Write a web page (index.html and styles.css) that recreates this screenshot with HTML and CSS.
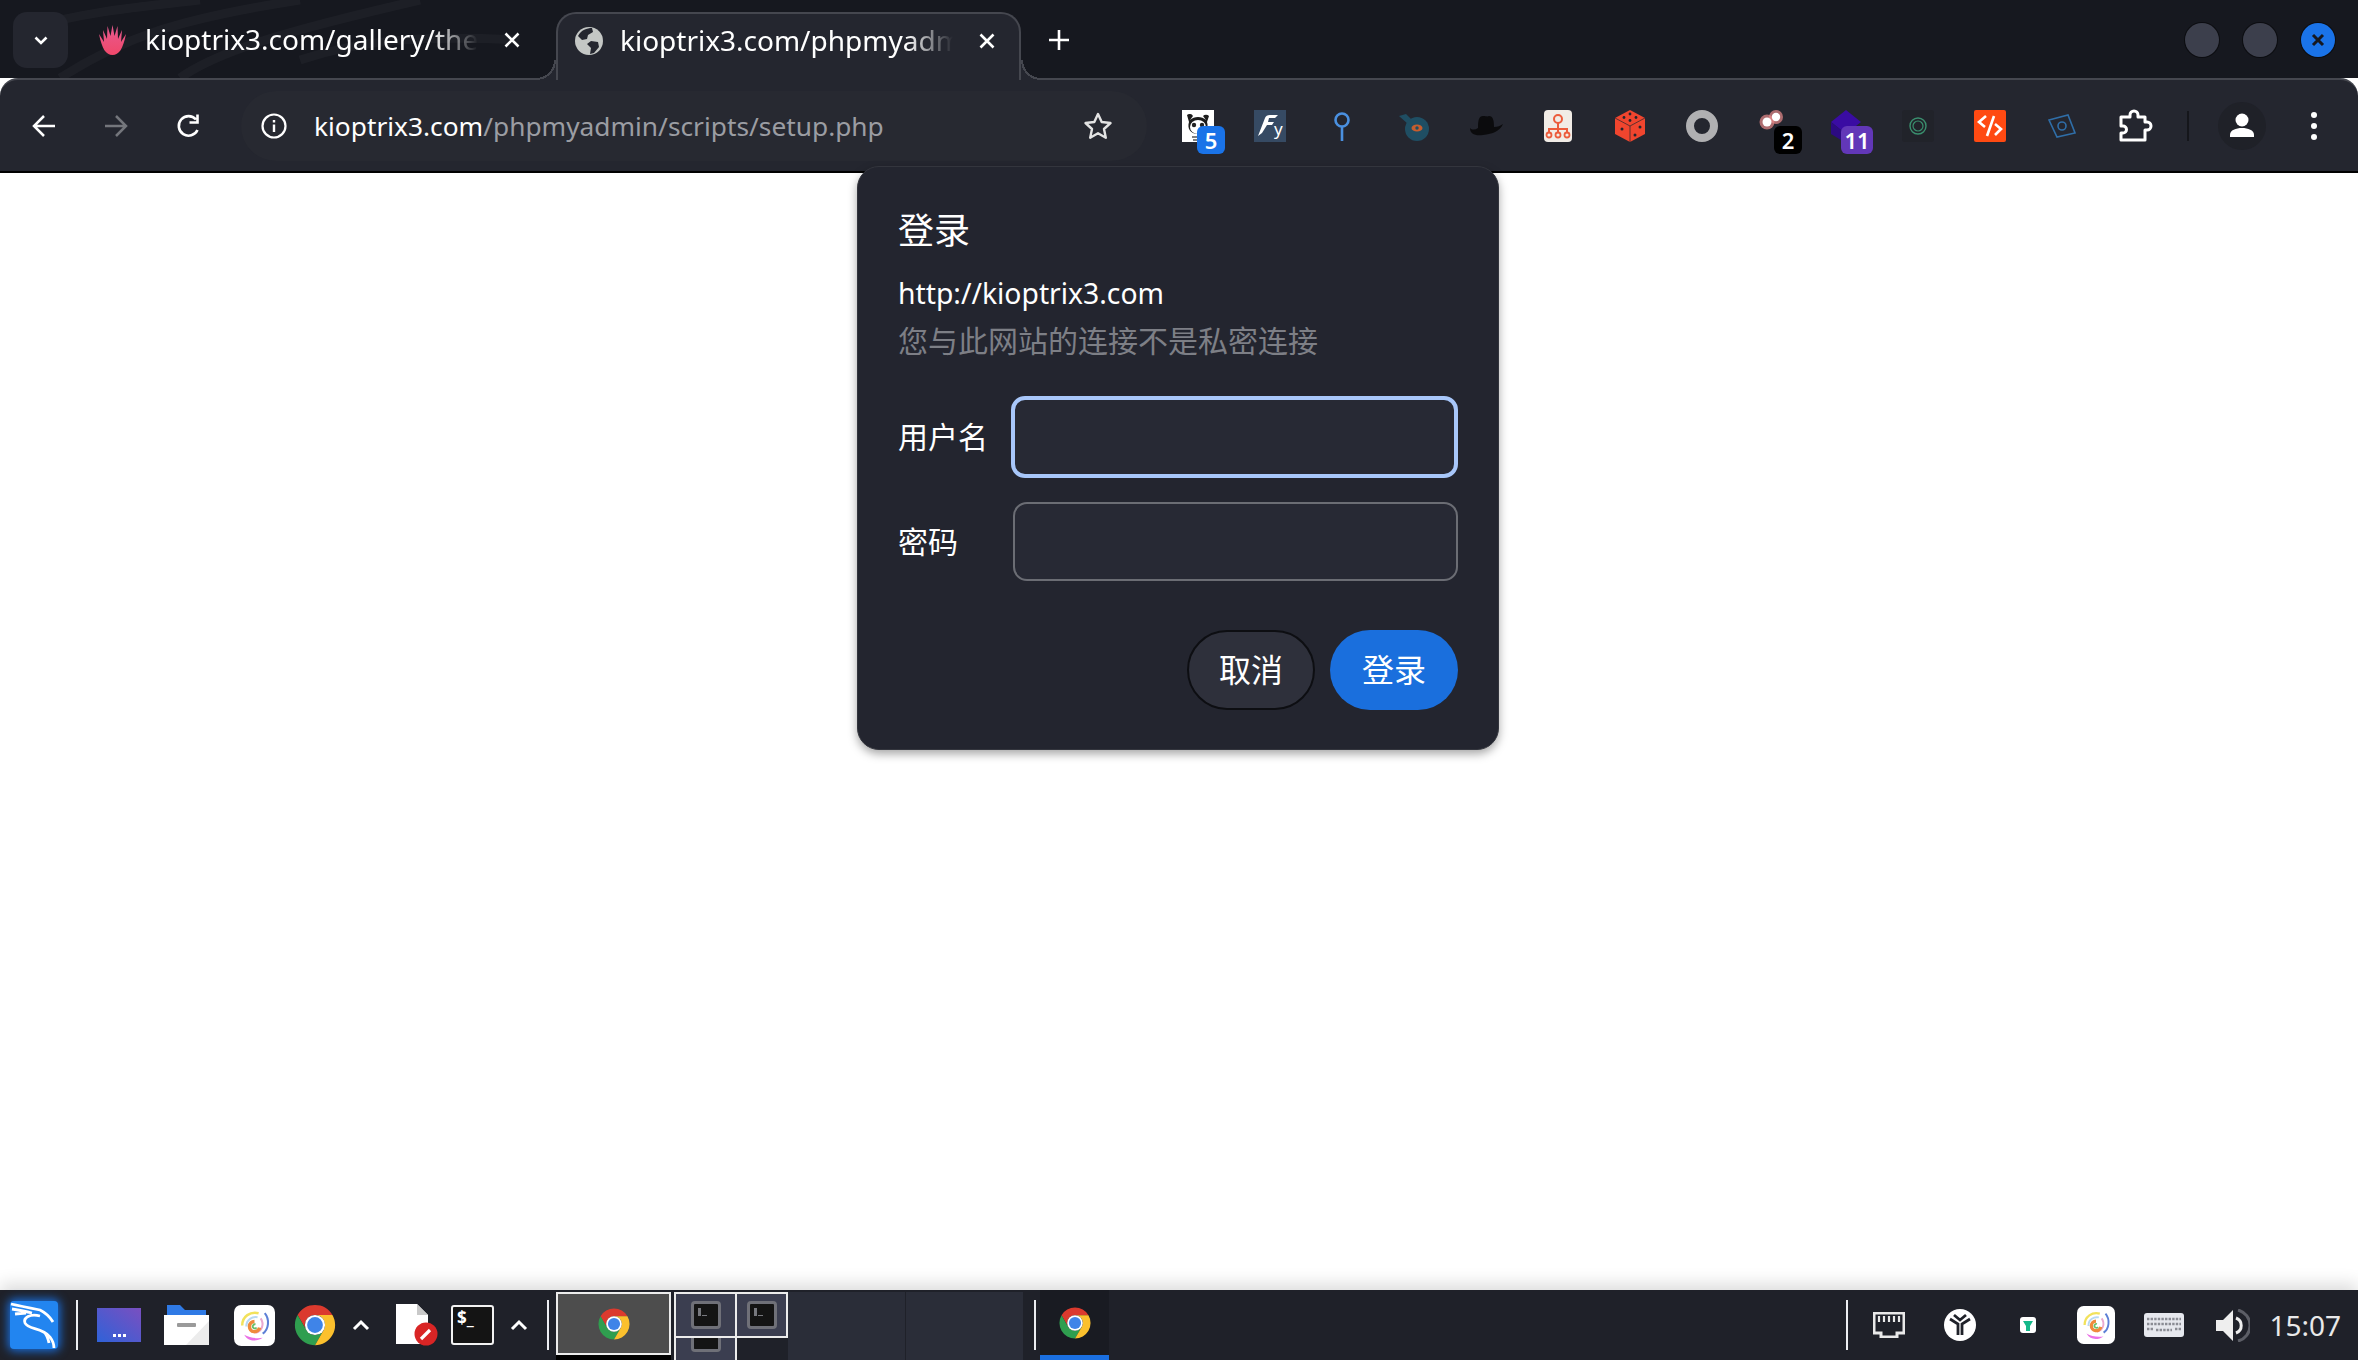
FILE: index.html
```html
<!DOCTYPE html>
<html lang="zh">
<head>
    <meta charset="UTF-8">
    <title>kioptrix3.com/phpmyadmin/scripts/setup.php</title>
    <link rel="stylesheet" href="styles.css">
</head>
<body>
    <svg class="defs" width="0" height="0">
        <symbol id="chrome" viewBox="0 0 48 48">
            <path fill="#db3a2e" d="M43 13H24A11 11 0 0 0 14.47 29.5L5 13A22 22 0 0 1 43 13Z"/>
            <path fill="#2f9e4f" d="M5 13L14.47 29.5A11 11 0 0 0 33.5 29.5L24 46A22 22 0 0 1 5 13Z"/>
            <path fill="#fbc02d" d="M24 46L33.5 29.5A11 11 0 0 0 24 13H43A22 22 0 0 1 24 46Z"/>
            <circle cx="24" cy="24" r="11" fill="#fff"/>
            <circle cx="24" cy="24" r="8.6" fill="#3f84e8"/>
        </symbol>
        <symbol id="swirl" viewBox="0 0 40 40">
            <rect width="40" height="40" rx="7" fill="#fff"/>
            <path d="M8 20C8 11 16 6 24 8" fill="none" stroke="#f2e25c" stroke-width="2.4"/>
            <path d="M12 21C12 14 18 11 23 12" fill="none" stroke="#b7d8f2" stroke-width="2"/>
            <path d="M30 8C35 14 34 24 28 28" fill="none" stroke="#5c7fd6" stroke-width="2"/>
            <path d="M26 13C30 19 27 26 21 27" fill="none" stroke="#e9a8d0" stroke-width="2"/>
            <path d="M20 16A5 5 0 1 0 25 22" fill="none" stroke="#ef8a3c" stroke-width="3.4"/>
            <path d="M21 19A2 2 0 1 0 22 22" fill="none" stroke="#6abf69" stroke-width="1.8"/>
            <path d="M10 29C14 36 22 36 28 32C22 33 15 32 10 29Z" fill="#ea70e6"/>
        </symbol>
    </svg>

    <header class="tabstrip">
        <svg class="wallpaper" width="700" height="78" viewBox="0 0 700 78">
            <path d="M60 78C120 40 170 20 300 0M180 78C220 50 290 30 420 0M300 60C360 40 420 35 520 40M20 30C90 10 150 6 200 0" fill="none" stroke="#fff" stroke-opacity=".03" stroke-width="9"/>
        </svg>
        <button class="tab-search">
            <svg width="20" height="20" viewBox="0 0 20 20"><path d="M4.500 7.500L10 13l5.500-5.500" fill="none" stroke="#fff" stroke-width="2.600"/></svg>
        </button>
        <div class="tab tab-idle">
            <svg class="favicon" width="33" height="30" viewBox="0 0 33 30">
                <defs><linearGradient id="agave" x1="0" y1="0" x2="0" y2="1"><stop offset="0" stop-color="#e85a90"/><stop offset="1" stop-color="#f0486a"/></linearGradient></defs>
                <path fill="url(#agave)" d="M16.500 30C10 30 6 24 3 9L8 17 7 5 11 14 11.500 1 14.500 11 16.500 0 18.500 11 21.500 1 22 14 26 5 25 17 30 9C27 24 23 30 16.500 30Z"/>
            </svg>
            <span class="tab-title">kioptrix3.com/gallery/the</span>
            <svg class="tab-close" width="16" height="16" viewBox="0 0 16 16"><path d="M1.500 1.500l13 13M14.500 1.500l-13 13" stroke="#fff" stroke-width="2.600"/></svg>
        </div>
        <div class="tab tab-active">
            <svg class="favicon" width="28" height="28" viewBox="0 0 28 28">
                <circle cx="14" cy="14" r="14" fill="#c4c7c5"/>
                <path fill="#24262f" d="M3 9C6 3 12 1 17 1L18 5 13 8 12 12 7 13ZM16 14L23 15 24 20 19 26 15 27 16 21 12 17Z"/>
            </svg>
            <span class="tab-title">kioptrix3.com/phpmyadmin</span>
            <svg class="tab-close" width="16" height="16" viewBox="0 0 16 16"><path d="M1.500 1.500l13 13M14.500 1.500l-13 13" stroke="#fff" stroke-width="2.600"/></svg>
        </div>
        <svg class="new-tab" width="22" height="22" viewBox="0 0 22 22"><path d="M11 1v20M1 11h20" stroke="#fff" stroke-width="2.600"/></svg>
        <div class="window-btns">
            <span class="win-btn"></span>
            <span class="win-btn"></span>
            <span class="win-btn win-close">
                <svg width="14" height="14" viewBox="0 0 14 14"><path d="M2 2l10 10M12 2L2 12" stroke="#16181f" stroke-width="3"/></svg>
            </span>
        </div>
    </header>

    <nav class="toolbar">
        <svg class="nav-icon" width="24" height="24" viewBox="0 0 24 24"><path d="M23 12H3M12 2L2 12l10 10" fill="none" stroke="#fff" stroke-width="2.500"/></svg>
        <svg class="nav-icon" width="24" height="24" viewBox="0 0 24 24"><path d="M1 12h20M12 2l10 10-10 10" fill="none" stroke="#74767c" stroke-width="2.500"/></svg>
        <svg class="nav-icon" width="26" height="26" viewBox="0 0 26 26"><path d="M21.500 17A9.800 9.800 0 1 1 20 6.500M21.500 1.500v8h-8" fill="none" stroke="#fff" stroke-width="2.600"/></svg>
        <div class="omnibox">
            <svg width="26" height="26" viewBox="0 0 26 26"><circle cx="13" cy="13" r="11.500" fill="none" stroke="#fff" stroke-width="2.200"/><path d="M13 11.500V19M13 7v2.400" stroke="#fff" stroke-width="2.400"/></svg>
            <span class="url"><span class="url-host">kioptrix3.com</span>/phpmyadmin/scripts/setup.php</span>
            <svg class="star" width="30" height="30" viewBox="0 0 30 30"><path d="M15 3l3.700 8 8.800 1-6.500 6 1.800 8.700L15 22.300 7.200 26.700 9 18l-6.500-6 8.800-1z" fill="none" stroke="#e3e3e3" stroke-width="2.400" stroke-linejoin="round"/></svg>
        </div>

        <div class="ext-list">
            <div class="ext">
                <svg width="32" height="32" viewBox="0 0 32 32">
                    <rect width="32" height="32" fill="#fff"/>
                    <path d="M5 5a4 4 0 0 1 6 1L8 10C12 6 20 6 24 10L21 6a4 4 0 0 1 6 0l-2 6c2 6-1 12-9 12S5 18 7 12Z" fill="#1c1c1c"/>
                    <ellipse cx="16" cy="17" rx="8" ry="7" fill="#fff"/>
                    <circle cx="12" cy="15" r="2.200" fill="#222"/><circle cx="20" cy="15" r="2.200" fill="#222"/>
                    <path d="M10 27h12M11 30h10" stroke="#555" stroke-width="1.400"/>
                </svg>
                <span class="badge badge-blue">5</span>
            </div>
            <div class="ext">
                <svg width="32" height="32" viewBox="0 0 32 32">
                    <rect width="32" height="32" fill="#364a63"/>
                    <path d="M4 26L11 8Q12 5 16 5H24L21 8H15L14 12H20L18 15H13L8 23Z" fill="#fff"/>
                    <text class="fy-y" x="20" y="25">y</text>
                </svg>
            </div>
            <div class="ext">
                <svg width="32" height="32" viewBox="0 0 32 32"><circle cx="16" cy="10" r="6.500" fill="none" stroke="#4a90e0" stroke-width="2.600"/><path d="M16 17v14" stroke="#4a90e0" stroke-width="2.600"/></svg>
            </div>
            <div class="ext">
                <svg width="32" height="32" viewBox="0 0 32 32">
                    <path d="M1 6l7-2 8 8-6 2z" fill="#1f4e63"/>
                    <circle cx="19" cy="19" r="12" fill="#1f4e63"/>
                    <ellipse cx="19" cy="18" rx="5.500" ry="3.600" fill="#c65d2e"/><circle cx="19" cy="18" r="1.700" fill="#1f4e63"/>
                </svg>
            </div>
            <div class="ext">
                <svg width="34" height="24" viewBox="0 0 34 24">
                    <path d="M9 14C9 6 10 2 14 2c3 0 4 1 6 0 4 0 5 4 5 11 4 0 6-1 9-3-3 7-10 10-20 11C6 22 1 20 1 14c2 2 5 2 8 0Z" fill="#0b0b0d"/>
                </svg>
            </div>
            <div class="ext">
                <svg width="28" height="32" viewBox="0 0 28 32">
                    <rect width="28" height="32" rx="4" fill="#f1ece6"/>
                    <circle cx="14" cy="9" r="4" fill="none" stroke="#ec5c3c" stroke-width="2"/>
                    <path d="M14 13v5M5 23v-4h18v4M14 18v5" fill="none" stroke="#ec5c3c" stroke-width="2"/>
                    <circle cx="5" cy="25" r="2.500" fill="none" stroke="#ec5c3c" stroke-width="1.800"/><circle cx="14" cy="25" r="2.500" fill="none" stroke="#ec5c3c" stroke-width="1.800"/><circle cx="23" cy="25" r="2.500" fill="none" stroke="#ec5c3c" stroke-width="1.800"/>
                </svg>
            </div>
            <div class="ext">
                <svg width="32" height="32" viewBox="0 0 32 32">
                    <path d="M16 0L31 8V24L16 32 1 24V8Z" fill="#f0452e"/>
                    <path d="M16 16L1 8M16 16L31 8M16 16V32" stroke="#23252e" stroke-width=".7"/>
                    <circle cx="16" cy="4" r="1.400" fill="#23252e"/><circle cx="10" cy="7.500" r="1.400" fill="#23252e"/><circle cx="22" cy="7.500" r="1.400" fill="#23252e"/><circle cx="16" cy="10.500" r="1.400" fill="#23252e"/>
                    <circle cx="8" cy="19" r="1.500" fill="#23252e"/><circle cx="21" cy="25" r="1.500" fill="#23252e"/><circle cx="26" cy="17" r="1.500" fill="#23252e"/>
                </svg>
            </div>
            <div class="ext">
                <svg width="32" height="32" viewBox="0 0 32 32"><circle cx="16" cy="16" r="12" fill="none" stroke="#b0b0b2" stroke-width="8"/></svg>
            </div>
            <div class="ext">
                <svg width="32" height="32" viewBox="0 0 32 32">
                    <circle cx="9" cy="12" r="7.500" fill="#e88a8a" opacity=".7"/><circle cx="18" cy="7" r="7" fill="#e88a8a" opacity=".7"/>
                    <circle cx="9" cy="12" r="4.500" fill="#fff"/><circle cx="18" cy="7" r="4.200" fill="#fff"/>
                </svg>
                <span class="badge badge-black">2</span>
            </div>
            <div class="ext">
                <svg width="32" height="32" viewBox="0 0 32 32"><path d="M16 0L31 12 16 24 1 12Z" fill="#3a0ca3"/><path d="M1 12v12l10 6 5-6z" fill="#2c0a82"/></svg>
                <span class="badge badge-purple">11</span>
            </div>
            <div class="ext">
                <svg width="32" height="32" viewBox="0 0 32 32">
                    <rect width="32" height="32" rx="3" fill="#21232a"/>
                    <circle cx="16" cy="16" r="8" fill="none" stroke="#3a8f6e" stroke-width="1.400"/><circle cx="16" cy="16" r="5" fill="none" stroke="#3a8f6e" stroke-width="1.200"/>
                </svg>
            </div>
            <div class="ext">
                <svg width="32" height="32" viewBox="0 0 32 32">
                    <rect width="32" height="32" rx="2" fill="#ff4a12"/>
                    <path d="M12 6L5 12l6 5M20 6L13 26M21 14l6 5-6 6" fill="none" stroke="#fff" stroke-width="2.600"/>
                </svg>
            </div>
            <div class="ext">
                <svg width="28" height="24" viewBox="0 0 28 24">
                    <path d="M1 6L20 1l7 18-18 4Z" fill="none" stroke="#2f6ea8" stroke-width="1.600"/>
                    <circle cx="14" cy="12" r="4" fill="none" stroke="#2f6ea8" stroke-width="1.600"/>
                </svg>
            </div>
            <div class="ext ext-puzzle">
                <svg width="34" height="34" viewBox="0 0 34 34">
                    <path d="M2 8H11V6a4 4 0 0 1 8 0V8H26V13H28a4 4 0 0 1 0 8H26V31H2V24H4a3.500 3.500 0 0 0 0-7H2Z" fill="none" stroke="#fff" stroke-width="3" stroke-linejoin="round"/>
                </svg>
            </div>
        </div>
        <span class="toolbar-sep"></span>
        <div class="ext ext-profile">
            <svg width="30" height="30" viewBox="0 0 30 30"><circle cx="15" cy="9" r="6.500" fill="#fff"/><path d="M3 26v-2c0-5 6-7 12-7s12 2 12 7v2Z" fill="#fff"/></svg>
        </div>
        <div class="ext ext-menu">
            <svg width="8" height="30" viewBox="0 0 8 30"><circle cx="4" cy="4" r="3" fill="#fff"/><circle cx="4" cy="15" r="3" fill="#fff"/><circle cx="4" cy="26" r="3" fill="#fff"/></svg>
        </div>
    </nav>

    <main class="page">
        <form class="auth-dialog">
            <h2 class="auth-title">登录</h2>
            <p class="auth-origin">http://kioptrix3.com</p>
            <p class="auth-note">您与此网站的连接不是私密连接</p>
            <div class="field">
                <label for="username">用户名</label>
                <input id="username" class="input-focus" type="text">
            </div>
            <div class="field">
                <label for="password">密码</label>
                <input id="password" type="password">
            </div>
            <div class="auth-actions">
                <button class="btn btn-cancel" type="button">取消</button>
                <button class="btn btn-login" type="submit">登录</button>
            </div>
        </form>
    </main>

    <footer class="taskbar">
        <div class="kali">
            <svg width="48" height="48" viewBox="0 0 48 48">
                <path d="M1 3C10 5 20 7 30 9C36 12 40 16 43 21M2 8C8 9 14 10 22 12M5 13L16 12M30 15C20 12 13 17 15 22C18 29 32 26 40 36C43 40 44 43 44 47M34 31C37 34 38 37 39 42" fill="none" stroke="#fff" stroke-width="2.800"/>
            </svg>
        </div>
        <span class="task-sep sep-first"></span>
        <svg class="launcher launch-grid" width="44" height="34" viewBox="0 0 44 34">
            <defs><linearGradient id="gridfill" x1="0" y1="1" x2="1" y2="0"><stop offset="0" stop-color="#2f62d8"/><stop offset="1" stop-color="#7a4fc0"/></linearGradient></defs>
            <rect width="44" height="34" fill="url(#gridfill)"/>
            <rect x="16" y="26" width="3" height="3" fill="#fff"/><rect x="21" y="26" width="3" height="3" fill="#fff"/><rect x="26" y="26" width="3" height="3" fill="#fff"/>
        </svg>
        <svg class="launcher launch-folder" width="45" height="40" viewBox="0 0 45 40">
            <path d="M3 0h13l5 5h21v8H3Z" fill="#2f7ae5"/>
            <path d="M0 10h45v30H0Z" fill="#fff"/>
            <path d="M45 16v24H22Z" fill="#ececec"/>
            <rect x="13" y="18" width="19" height="4" rx="1" fill="#9a9a9a"/>
        </svg>
        <svg class="launcher launch-swirl" width="41" height="41"><use href="#swirl"/></svg>
        <svg class="launcher launch-chrome" width="44" height="44"><use href="#chrome"/></svg>
        <svg class="caret caret-one" width="18" height="12" viewBox="0 0 18 12"><path d="M2 10l7-7 7 7" fill="none" stroke="#fff" stroke-width="3"/></svg>
        <div class="launcher launch-doc">
            <svg width="44" height="42" viewBox="0 0 44 42">
                <path d="M0 0h21l11 11v29H0Z" fill="#fff"/>
                <path d="M21 0l11 11H21Z" fill="#c9c9c9"/>
                <circle cx="30" cy="30" r="11.500" fill="#d92525"/>
                <path d="M25 35l9-9" stroke="#fff" stroke-width="3.200"/>
            </svg>
        </div>
        <div class="launcher launch-term">$_</div>
        <svg class="caret caret-two" width="18" height="12" viewBox="0 0 18 12"><path d="M2 10l7-7 7 7" fill="none" stroke="#fff" stroke-width="3"/></svg>
        <span class="task-sep sep-second"></span>

        <div class="pager">
            <div class="pager-desk pager-chrome">
                <svg width="34" height="34"><use href="#chrome"/></svg>
            </div>
            <div class="pager-terms">
                <div class="pager-term"><span class="mini-term"></span></div>
                <div class="pager-term pager-term-narrow"><span class="mini-term"></span></div>
                <div class="pager-term pager-term-low"><span class="mini-term"></span></div>
            </div>
            <div class="pager-desk pager-empty"></div>
            <div class="pager-desk pager-empty"></div>
        </div>

        <span class="task-sep sep-third"></span>
        <div class="task-active">
            <svg width="34" height="34"><use href="#chrome"/></svg>
        </div>

        <div class="tray">
            <span class="task-sep"></span>
            <svg class="tray-net" width="32" height="26" viewBox="0 0 32 26">
                <path d="M1 1h30v20h-7v4H8v-4H1Z" fill="none" stroke="#e9e9e9" stroke-width="3"/>
                <path d="M6 4v6M11 4v6M16 4v6M21 4v6M26 4v6" stroke="#e9e9e9" stroke-width="2.200"/>
            </svg>
            <svg class="tray-y" width="32" height="32" viewBox="0 0 32 32">
                <circle cx="16" cy="16" r="16" fill="#fff"/>
                <path d="M6 10l8 5v11M26 10l-8 5v11M10 6l6 5 6-5" fill="none" stroke="#1f2129" stroke-width="2.800"/>
            </svg>
            <svg class="tray-green" width="16" height="16" viewBox="0 0 16 16">
                <rect width="16" height="16" rx="3" fill="#fff"/>
                <path d="M3 4h10l-3 5v5H6V9Z" fill="#14b88a"/>
            </svg>
            <svg class="tray-swirl" width="38" height="38"><use href="#swirl"/></svg>
            <svg class="tray-kbd" width="40" height="24" viewBox="0 0 40 24">
                <rect width="40" height="24" rx="3" fill="#e6e8ee"/>
                <path d="M3 6h34M3 11h34M3 16h6M12 17h16M31 16h6" stroke="#8a8c94" stroke-width="2.400" stroke-dasharray="2.400 1.200"/>
            </svg>
            <svg class="tray-vol" width="34" height="33" viewBox="0 0 34 33">
                <path d="M0 11h7L17 1v31L7 22H0Z" fill="#eee"/>
                <path d="M20 9a8 8 0 0 1 0 15" fill="none" stroke="#eee" stroke-width="3"/>
                <path d="M22 1a16 16 0 0 1 0 31" fill="none" stroke="#5c5e66" stroke-width="3"/>
            </svg>
            <span class="clock">15:07</span>
        </div>
    </footer>
</body>
</html>
```

FILE: styles.css
```css
* {
    margin: 0;
    padding: 0;
    box-sizing: border-box;
}

html, body {
    height: 100%;
}

body {
    display: flex;
    flex-direction: column;
    height: 1360px;
    overflow: hidden;
    font-family: "Noto Sans", "Noto Sans CJK SC", sans-serif;
    background-color: #fff;
    color: #fff;
}

.defs {
    position: absolute;
}

/* tab strip */
.tabstrip {
    position: relative;
    z-index: 2;
    display: flex;
    align-items: flex-start;
    flex: 0 0 78px;
    min-height: 0;
    padding: 12px 23px 0 13px;
    background-color: #16181f;
}

.wallpaper {
    position: absolute;
    top: 0;
    left: 0;
}

.tab-search {
    position: relative;
    display: flex;
    align-items: center;
    justify-content: center;
    width: 55px;
    height: 56px;
    border: none;
    border-radius: 14px;
    background-color: #24262f;
}

.tab {
    position: relative;
    display: flex;
    align-items: center;
    flex: none;
    height: 56px;
    width: 465px;
    padding: 0 24px 0 28px;
}

.tab-idle {
    width: 488px;
    padding-right: 36px;
}

.tab-title {
    flex: 1;
    overflow: hidden;
    margin: -2px 0 0 16px;
    font-size: 28px;
    white-space: nowrap;
    -webkit-mask-image: linear-gradient(90deg, #000 86%, transparent 100%);
    mask-image: linear-gradient(90deg, #000 86%, transparent 100%);
}

.tab-close {
    margin-left: 26px;
    flex: none;
}

.tab-active {
    height: 68px;
    padding: 0 24px 12px 17px;
    background-color: #24262f;
    border: 2px solid #45474f;
    border-bottom: none;
    border-radius: 20px 20px 0 0;
}

.tab-active .tab-title {
    margin-left: 17px;
}

.tab-active::before,
.tab-active::after {
    content: '';
    position: absolute;
    bottom: 0;
    width: 20px;
    height: 20px;
}

.tab-active::before {
    left: -22px;
    background: radial-gradient(circle at 0 0, transparent 18px, #45474f 18px, #45474f 20px, #24262f 20px);
}

.tab-active::after {
    right: -22px;
    background: radial-gradient(circle at 100% 0, transparent 18px, #45474f 18px, #45474f 20px, #24262f 20px);
}

.new-tab {
    position: relative;
    flex: none;
    margin: 17px 0 0 27px;
}

.window-btns {
    position: relative;
    display: flex;
    gap: 24px;
    margin: 11px 0 0 auto;
}

.win-btn {
    display: flex;
    align-items: center;
    justify-content: center;
    width: 34px;
    height: 34px;
    border-radius: 50%;
    background-color: #3c3f4c;
    box-shadow: 0 0 0 1px #0c0d11;
}

.win-close {
    background-color: #1a73e8;
}

/* toolbar */
.toolbar {
    position: relative;
    display: flex;
    align-items: center;
    flex: 0 0 95px;
    padding: 0 0 0 32px;
    background-color: #24262f;
    border-top: 2px solid #45474f;
    border-bottom: 2px solid #000;
    border-radius: 18px 18px 0 0;
}

.nav-icon {
    flex: none;
    margin-right: 48px;
}

.nav-icon:nth-of-type(3) {
    margin-right: 0;
}

.omnibox {
    display: flex;
    align-items: center;
    flex: none;
    width: 906px;
    height: 70px;
    margin-left: 39px;
    padding: 0 34px 0 20px;
    border-radius: 35px;
    background-color: #272931;
}

.url {
    margin-left: 27px;
    font-size: 26.300px;
    color: #9b9da3;
}

.url-host {
    color: #fff;
}

.star {
    margin-left: auto;
}

.ext-list {
    display: flex;
    margin-left: 15px;
}

.ext {
    position: relative;
    display: flex;
    align-items: center;
    justify-content: center;
    flex: none;
    width: 72px;
    height: 48px;
}

.ext-puzzle {
    left: 2px;
}

.fy-y {
    font-size: 17px;
    fill: #fff;
}

.badge {
    position: absolute;
    display: flex;
    align-items: center;
    justify-content: center;
    min-width: 28px;
    height: 28px;
    padding: 0 3px;
    border-radius: 6px;
    font-size: 22px;
    font-weight: 600;
    color: #fff;
}

.badge-blue {
    top: 24px;
    left: 35px;
    background-color: #1a73e8;
}

.badge-black {
    top: 24px;
    left: 36px;
    background-color: #000;
}

.badge-purple {
    top: 24px;
    left: 31px;
    min-width: 32px;
    background-color: #6237b8;
}

.toolbar-sep {
    flex: none;
    width: 2px;
    height: 30px;
    margin-left: 17px;
    background-color: #15161b;
}

.ext-profile {
    margin-left: 29px;
    background-color: #1f2128;
    width: 48px;
    border-radius: 24px;
}

.ext-menu {
    margin-left: 44px;
    width: 8px;
}

/* page and auth dialog */
.page {
    position: relative;
    flex: 1;
    background-color: #fff;
}

.auth-dialog {
    position: absolute;
    top: -7px;
    left: 857px;
    display: flex;
    flex-direction: column;
    width: 642px;
    height: 584px;
    padding: 40px 40px 0 40px;
    border: 1px solid #33353d;
    border-radius: 22px;
    background-color: #23252f;
    box-shadow: 0 4px 10px rgba(0, 0, 0, 0.35);
}

.auth-title {
    font-size: 36px;
    line-height: 48px;
    font-weight: 400;
}

.auth-origin {
    margin-top: 17px;
    font-size: 28.300px;
    line-height: 42px;
}

.auth-note {
    margin-top: 6px;
    font-size: 30px;
    line-height: 42px;
    color: #7d7f86;
}

.field {
    display: flex;
    align-items: center;
    height: 81px;
    margin-bottom: 24px;
}

.field:first-of-type {
    margin-top: 34px;
}

.field label {
    flex: none;
    width: 114px;
    margin-bottom: 4px;
    font-size: 30px;
}

.field input {
    width: 446px;
    height: 79px;
    margin-left: 1px;
    border: 2px solid #6b6d74;
    border-radius: 14px;
    background-color: #272934;
    outline: none;
}

.field input.input-focus {
    width: 449px;
    height: 82px;
    margin-left: -1px;
    border: 4px solid #a8c7fa;
}

.auth-actions {
    display: flex;
    justify-content: flex-end;
    gap: 15px;
    margin-top: 24px;
    padding-right: 0;
}

.btn {
    width: 128px;
    height: 80px;
    padding-bottom: 5px;
    border: none;
    border-radius: 40px;
    font-family: inherit;
    font-size: 32px;
    color: #fff;
}

.btn-cancel {
    background-color: #2e303b;
    border: 2px solid #0d0e12;
}

.btn-login {
    background-color: #1a6fdd;
}

/* taskbar */
.taskbar {
    position: relative;
    display: flex;
    align-items: center;
    flex: 0 0 70px;
    background-color: #1f2129;
    box-shadow: 0 -6px 16px rgba(0, 0, 0, 0.14);
}

.kali {
    display: flex;
    flex: none;
    width: 48px;
    height: 48px;
    margin-left: 10px;
    border-radius: 4px;
    background-color: #2285f0;
    box-shadow: 0 0 10px 2px #1a6fdd;
}

.task-sep {
    flex: none;
    width: 2px;
    height: 50px;
    background-color: #eceef2;
}

.sep-first {
    margin-left: 18px;
}

.launcher {
    flex: none;
}

.launch-grid {
    margin-left: 19px;
}

.launch-folder {
    margin-left: 23px;
}

.launch-swirl {
    margin-left: 25px;
}

.launch-chrome {
    margin-left: 18px;
}

.caret {
    flex: none;
}

.caret-one {
    margin-left: 15px;
}

.launch-doc {
    display: flex;
    width: 44px;
    margin-left: 26px;
}

.launch-term {
    width: 43px;
    height: 40px;
    margin-left: 11px;
    padding-left: 4px;
    border: 2px solid #f2f2f2;
    border-radius: 3px;
    background-color: #141414;
    font-size: 17px;
    font-weight: 700;
    line-height: 22px;
}

.caret-two {
    margin-left: 16px;
}

.sep-second {
    margin-left: 19px;
}

.pager {
    display: flex;
    align-self: stretch;
    flex: none;
    margin-left: 7px;
    padding-top: 2px;
}

.pager-desk {
    display: flex;
    align-items: center;
    justify-content: center;
}

.pager-chrome {
    width: 115px;
    height: 63px;
    border: 2px solid #ececec;
    background-color: #4d4d4d;
    box-shadow: 0 5px 0 #000;
}

.pager-terms {
    display: grid;
    grid-template-columns: 63px 51px;
    grid-template-rows: 46px 22px;
    width: 114px;
    margin-left: 3px;
}

.pager-term {
    display: flex;
    align-items: center;
    justify-content: center;
    border: 2px solid #ececec;
    background-color: #3b3e50;
}

.pager-term-narrow {
    border-left: none;
}

.pager-term-low {
    grid-column: 1;
    border-top: none;
    border-bottom: none;
    align-items: flex-start;
}

.mini-term {
    position: relative;
    width: 30px;
    height: 28px;
    border: 3px solid #6f7078;
    border-radius: 4px;
    background-color: #141414;
}

.mini-term::before {
    content: '';
    position: absolute;
    top: 4px;
    left: 4px;
    width: 3px;
    height: 8px;
    background-color: #77787e;
}

.mini-term::after {
    content: '';
    position: absolute;
    top: 11px;
    left: 8px;
    width: 5px;
    height: 1px;
    background-color: #77787e;
}

.pager-term-low .mini-term {
    height: 14px;
    border-top: none;
    border-radius: 0 0 4px 4px;
}

.pager-term-low .mini-term::before,
.pager-term-low .mini-term::after {
    display: none;
}

.pager-empty {
    width: 118px;
    background-color: #2a2d38;
    border-right: 1px solid #1f2129;
}

.sep-third {
    margin-left: 10px;
}

.task-active {
    display: flex;
    align-items: center;
    justify-content: center;
    align-self: stretch;
    flex: none;
    width: 69px;
    margin-left: 4px;
    background-color: #191b22;
    border-bottom: 5px solid #1a6fe0;
}

.tray {
    display: flex;
    align-items: center;
    flex: none;
    margin-left: auto;
    padding-right: 17px;
}

.tray-net {
    margin-left: 25px;
}

.tray-y {
    margin-left: 39px;
}

.tray-green {
    margin-left: 44px;
}

.tray-swirl {
    margin-left: 41px;
}

.tray-kbd {
    margin-left: 29px;
}

.tray-vol {
    margin-left: 32px;
}

.clock {
    margin-left: 19px;
    font-size: 28px;
    color: #e9e9e9;
}
```
